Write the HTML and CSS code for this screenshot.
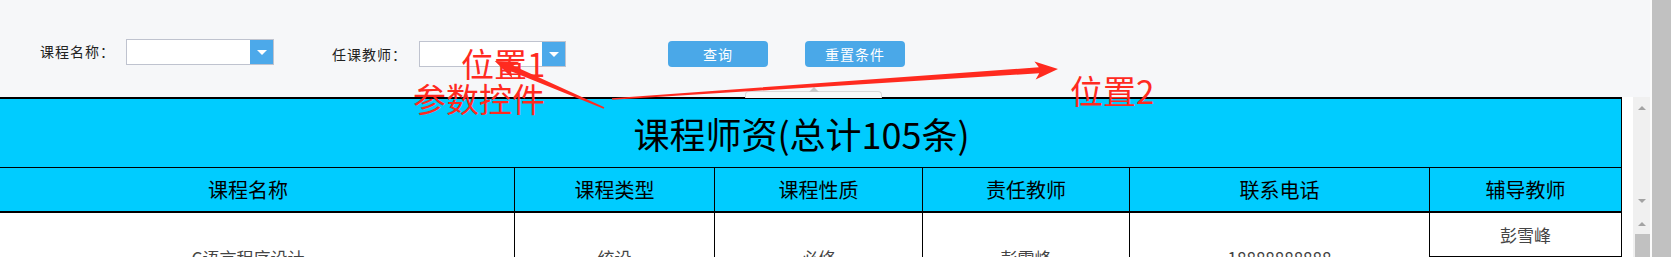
FILE: index.html
```html
<!DOCTYPE html>
<html lang="zh-CN">
<head>
    <meta charset="UTF-8">
    <meta name="viewport" content="width=device-width, initial-scale=1.0">
    <title>课程师资</title>
    <link rel="stylesheet" href="styles.css">
</head>
<body>
    <div class="page">
        <div class="main">
            <div class="toolbar">
                <label class="field-label label-name">课程名称：</label>
                <div class="combo combo-name">
                    <input type="text">
                    <span class="combo-btn"></span>
                </div>
                <label class="field-label label-teacher">任课教师：</label>
                <div class="combo combo-teacher">
                    <input type="text">
                    <span class="combo-btn"></span>
                </div>
                <button class="btn btn-query">查询</button>
                <button class="btn btn-reset">重置条件</button>
                <div class="ghost-tip"></div>
            </div>

            <div class="report">
                <div class="report-body">
                    <table class="grid">
                        <colgroup>
                            <col style="width: 533px">
                            <col style="width: 200px">
                            <col style="width: 208px">
                            <col style="width: 207px">
                            <col style="width: 300px">
                            <col style="width: 192px">
                        </colgroup>
                        <tr>
                            <td class="title-cell" colspan="6">课程师资(总计105条)</td>
                        </tr>
                        <tr class="head-row">
                            <td>课程名称</td>
                            <td>课程类型</td>
                            <td>课程性质</td>
                            <td>责任教师</td>
                            <td>联系电话</td>
                            <td>辅导教师</td>
                        </tr>
                        <tr class="data-row">
                            <td rowspan="2">C语言程序设计</td>
                            <td rowspan="2">统设</td>
                            <td rowspan="2">必修</td>
                            <td rowspan="2">彭雪峰</td>
                            <td rowspan="2">18888888888</td>
                            <td class="tutor">彭雪峰</td>
                        </tr>
                        <tr class="data-row">
                            <td class="tutor">王晓敏</td>
                        </tr>
                    </table>
                </div>
                <div class="inner-scroll">
                    <div class="track track-head">
                        <span class="arrow up"></span>
                        <span class="arrow down"></span>
                    </div>
                    <div class="track track-body">
                        <span class="arrow up"></span>
                        <div class="thumb"></div>
                    </div>
                </div>
            </div>
        </div>
        <div class="page-scroll"></div>
    </div>

    <!-- red annotations drawn over the screenshot -->
    <svg class="marks" width="1671" height="257" viewBox="0 0 1671 257">
        <g transform="translate(604 108) rotate(-156.7)">
            <polygon points="0,-0.8 100,-3 96,-9 119,0 96,9 100,3 0,0.8"></polygon>
        </g>
        <g transform="translate(612 99) rotate(-3.85)">
            <polygon points="0,-0.8 428,-3 424,-9 447,0 424,9 428,3 0,0.8"></polygon>
        </g>
    </svg>
    <span class="note note-pos1">位置1</span>
    <span class="note note-ctrl">参数控件</span>
    <span class="note note-pos2">位置2</span>
</body>
</html>
```

FILE: styles.css
```css
body {
    margin: 0;
    font-family: "Noto Sans CJK SC", sans-serif;
    background-color: #f6f7f9;
    position: relative;
    height: 257px;
    overflow: hidden;
}
.page {
    display: flex;
    height: 257px;
}
.main {
    width: 1650px;
    display: flex;
    flex-direction: column;
}

/* query bar */
.toolbar {
    height: 97px;
    box-sizing: border-box;
    padding: 40px 0 0 40px;
    display: flex;
    align-items: flex-start;
    position: relative;
}
.field-label {
    font-size: 14px;
    letter-spacing: 1px;
    line-height: 26px;
    color: #222;
}
.label-name {
    width: 86px;
    margin-top: -2px;
}
.label-teacher {
    width: 87px;
    margin-left: 58px;
    margin-top: 1px;
}
.combo {
    display: flex;
    width: 148px;
    height: 26px;
    box-sizing: border-box;
    border: 1px solid #bfc3cf;
    background: #fff;
}
.combo-name {
    margin-top: -1px;
}
.combo-teacher {
    width: 147px;
    margin-top: 1px;
}
.combo input {
    flex: 1;
    min-width: 0;
    border: 0;
    padding: 0 4px;
    outline: none;
}
.combo-btn {
    width: 23px;
    background: #4ca9ea;
    display: flex;
    align-items: center;
    justify-content: center;
}
.combo-btn::after {
    content: "";
    border-left: 5px solid transparent;
    border-right: 5px solid transparent;
    border-top: 5px solid #fff;
}
.btn {
    width: 100px;
    height: 26px;
    margin-top: 1px;
    padding: 0;
    border: 0;
    border-radius: 4px;
    background: #4aa8e8;
    color: #fff;
    font-family: inherit;
    font-size: 14px;
    letter-spacing: 1px;
}
.btn-query {
    margin-left: 102px;
}
.btn-reset {
    margin-left: 37px;
}
.ghost-tip {
    position: absolute;
    left: 745px;
    top: 91px;
    width: 135px;
    height: 6px;
    border: 1px solid #dadada;
    border-bottom: none;
    border-radius: 4px 4px 0 0;
    background: #f9f9f9;
}
.ghost-tip::before {
    content: "";
    position: absolute;
    left: 63px;
    top: -5px;
    border-left: 5px solid transparent;
    border-right: 5px solid transparent;
    border-bottom: 5px solid #c8c8c8;
}

/* report grid */
.report {
    flex: 1;
    display: flex;
    background: #fff;
    overflow: hidden;
}
.report-body {
    flex: 1;
    overflow: hidden;
}
.grid {
    border-collapse: separate;
    border-spacing: 0;
    table-layout: fixed;
    width: 1640px;
    margin-left: -18px;
    border-top: 2px solid #000;
}
.grid td {
    padding: 0;
    border-right: 1px solid #000;
    text-align: center;
    white-space: nowrap;
}
.title-cell {
    background: #00ccff;
    color: #000;
    font-size: 36px;
    line-height: 68px;
    border-bottom: 1px solid #000;
}
.head-row td {
    background: #00ccff;
    color: #000;
    font-size: 20px;
    line-height: 43px;
    border-bottom: 2px solid #000;
}
.data-row td {
    font-size: 17px;
    color: #444;
    vertical-align: middle;
}
.data-row td.tutor {
    line-height: 43px;
    border-bottom: 1px solid #000;
}

/* scrollbars */
.inner-scroll {
    width: 17px;
    background: #f0f0f0;
    display: flex;
    flex-direction: column;
}
.track {
    display: flex;
    flex-direction: column;
    align-items: center;
}
.track-head {
    height: 116px;
    box-sizing: border-box;
    padding: 9px 0 10px;
    justify-content: space-between;
}
.track-body {
    flex: 1;
    padding-top: 9px;
}
.arrow {
    width: 0;
    height: 0;
    border-left: 4px solid transparent;
    border-right: 4px solid transparent;
}
.arrow.up {
    border-bottom: 4px solid #a3a3a3;
}
.arrow.down {
    border-top: 4px solid #a3a3a3;
}
.thumb {
    width: 15px;
    margin: 8px 0 0 2px;
    flex: 1;
    background: #c1c1c1;
}
.page-scroll {
    width: 21px;
    box-sizing: border-box;
    border-left: 2px solid #fbfbfb;
    background: #c1c1c1;
}

/* annotations */
.marks {
    position: absolute;
    left: 0;
    top: 0;
    fill: #ff2a1f;
    pointer-events: none;
}
.note {
    position: absolute;
    color: #ff2a1f;
    font-size: 33px;
    line-height: 33px;
    white-space: nowrap;
}
.note-pos1 {
    left: 461px;
    top: 47px;
}
.note-ctrl {
    left: 413px;
    top: 82px;
}
.note-pos2 {
    left: 1070px;
    top: 74px;
}
```
